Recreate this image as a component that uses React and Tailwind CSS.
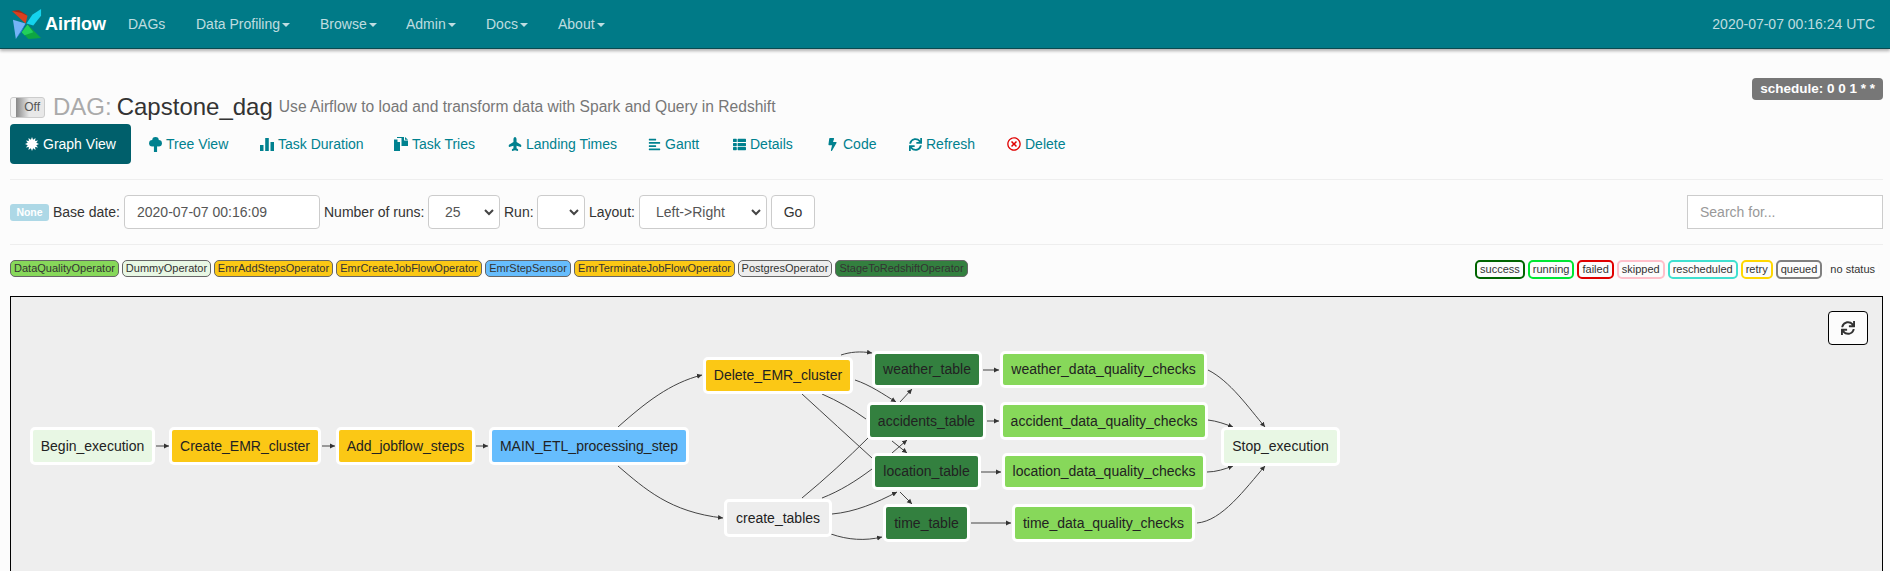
import { FaPlane, FaAlignLeft, FaThList, FaBolt, FaSync, FaRegTimesCircle } from "react-icons/fa";

const navItems = [
  { label: "DAGs", caret: false, w: "w-[68px]" },
  { label: "Data Profiling", caret: true, w: "w-[124px]" },
  { label: "Browse", caret: true, w: "w-[86px]" },
  { label: "Admin", caret: true, w: "w-[80px]" },
  { label: "Docs", caret: true, w: "w-[72px]" },
  { label: "About", caret: true, w: "w-[76px]" },
];

const operators = [
  { label: "DataQualityOperator", bg: "bg-[#87d85a]", w: "w-[109px]" },
  { label: "DummyOperator", bg: "bg-[#e8f7e4]", w: "w-[89px]" },
  { label: "EmrAddStepsOperator", bg: "bg-[#fbc815]", w: "w-[119px]" },
  { label: "EmrCreateJobFlowOperator", bg: "bg-[#fbc815]", w: "w-[146px]" },
  { label: "EmrStepSensor", bg: "bg-[#66bdfd]", w: "w-[86px]" },
  { label: "EmrTerminateJobFlowOperator", bg: "bg-[#fbc815]", w: "w-[161px]" },
  { label: "PostgresOperator", bg: "bg-[#ededed]", w: "w-[94px]" },
  { label: "StageToRedshiftOperator", bg: "bg-[#33803f]", w: "w-[133px]" },
];

const statuses = [
  { label: "success", border: "border-[#006400]" },
  { label: "running", border: "border-[#00e632]" },
  { label: "failed", border: "border-[#e00000]" },
  { label: "skipped", border: "border-[#ffc0cb]" },
  { label: "rescheduled", border: "border-[#40e0d0]" },
  { label: "retry", border: "border-[#ffd700]" },
  { label: "queued", border: "border-[#808080]" },
  { label: "no status", border: "border-[#fafafa]" },
];

const nodes = [
  { label: "Begin_execution", x: 30, y: 426, w: 125, h: 38, bg: "bg-[#e8f7e4]" },
  { label: "Create_EMR_cluster", x: 169, y: 426, w: 152, h: 38, bg: "bg-[#fbc815]" },
  { label: "Add_jobflow_steps", x: 336, y: 426, w: 139, h: 38, bg: "bg-[#fbc815]" },
  { label: "MAIN_ETL_processing_step", x: 489, y: 426, w: 200, h: 38, bg: "bg-[#66bdfd]" },
  { label: "Delete_EMR_cluster", x: 703, y: 356, w: 150, h: 37, bg: "bg-[#fbc815]" },
  { label: "create_tables", x: 724, y: 498, w: 108, h: 38, bg: "bg-[#ededed]" },
  { label: "weather_table", x: 872, y: 350, w: 110, h: 37, bg: "bg-[#33803f]" },
  { label: "accidents_table", x: 867, y: 401, w: 119, h: 38, bg: "bg-[#33803f]" },
  { label: "location_table", x: 872, y: 452, w: 109, h: 37, bg: "bg-[#33803f]" },
  { label: "time_table", x: 883, y: 503, w: 87, h: 38, bg: "bg-[#33803f]" },
  { label: "weather_data_quality_checks", x: 1000, y: 350, w: 207, h: 37, bg: "bg-[#87d85a]" },
  { label: "accident_data_quality_checks", x: 1000, y: 401, w: 208, h: 38, bg: "bg-[#87d85a]" },
  { label: "location_data_quality_checks", x: 1002, y: 452, w: 204, h: 37, bg: "bg-[#87d85a]" },
  { label: "time_data_quality_checks", x: 1012, y: 503, w: 183, h: 38, bg: "bg-[#87d85a]" },
  { label: "Stop_execution", x: 1221, y: 426, w: 119, h: 39, bg: "bg-[#e8f7e4]" },
];

// page coordinates, the canvas starts at 11,296
const edges = [
  ["M156,445 L169,445", true],
  ["M322,445 L335,445", true],
  ["M476,445 L488,445", true],
  ["M618,426 C645,402 670,382 702,374", true],
  ["M618,465 C645,488 670,511 723,517", true],
  ["M841,354 C850,351 860,350 872,352", true],
  ["M855,379 C870,384 883,393 896,401", true],
  ["M822,393 C838,400 852,408 866,418", false],
  ["M892,440 L907,452", true],
  ["M802,393 C825,414 850,437 872,457", false],
  ["M900,491 L912,503", true],
  ["M802,497 C825,478 848,457 868,437", false],
  ["M900,401 L912,388", true],
  ["M822,497 C840,490 856,480 872,468", false],
  ["M892,452 L907,439", true],
  ["M832,513 C855,511 876,502 897,491", true],
  ["M831,533 C848,539 865,540 882,536", true],
  ["M983,369 L999,369", true],
  ["M987,420 L999,420", true],
  ["M981,471 L1001,471", true],
  ["M971,522 L1011,522", true],
  ["M1208,369 C1230,380 1248,406 1265,426", true],
  ["M1208,419 C1217,420 1225,423 1233,426", true],
  ["M1207,471 C1216,471 1225,468 1233,465", true],
  ["M1197,522 C1222,520 1245,488 1265,465", true],
];

// spiky sun for the graph view tab
const burst = Array.from({ length: 24 }, (_, i) => {
  const r = i % 2 ? 4.4 : 7;
  const a = (i / 24) * Math.PI * 2;
  return `${(7 + r * Math.cos(a)).toFixed(2)},${(7 + r * Math.sin(a)).toFixed(2)}`;
}).join(" ");

const Logo = () => (
  <svg viewBox="0 0 32 32" className="h-[31px] w-[31px] shrink-0">
    <path d="M1 2 L8 1 L16 6 L15 14 Z" fill="#9c2a16" />
    <path d="M1 2 L15 15 L17 7 L11 4 Z" fill="#d8401f" />
    <path d="M31 0 L22 6 L16 15 L23 17 L31 7 Z" fill="#14d3ee" />
    <path d="M5 31 L2 11 L15 15 L11 22 Z" fill="#74b3f7" />
    <path d="M5 31 L15 15 L11 23 Z" fill="#2f7de8" />
    <path d="M31 30 L17 16 L11 24 L18 31 Z" fill="#0ea641" />
    <path d="M17 16 L23 24 L14 27 L11 24 Z" fill="#22cf5c" />
  </svg>
);

const BurstIcon = () => (
  <svg viewBox="0 0 14 14" fill="currentColor" className="h-[14px] w-[14px]">
    <polygon points={burst} />
  </svg>
);

const TreeIcon = () => (
  <svg viewBox="0 0 14 16" fill="currentColor" className="h-[15px] w-[13px]">
    <circle cx="7" cy="3.6" r="3.6" />
    <circle cx="3.6" cy="6.6" r="3.5" />
    <circle cx="10.4" cy="6.6" r="3.5" />
    <path d="M4.5 6h5v4h-5zM5.3 9h3.4v7H5.3z" />
  </svg>
);

const StatsIcon = () => (
  <svg viewBox="0 0 14 14" fill="currentColor" className="h-[14px] w-[14px]">
    <path d="M0 8h3.5v6H0zM5.2 1h3.6v13H5.2zM10.5 5H14v9h-3.5z" />
  </svg>
);

const DuplicateIcon = () => (
  <svg viewBox="0 0 14 14" fill="currentColor" className="h-[14px] w-[14px]">
    <path d="M0 2.5h3.5V5H6v9H0z" />
    <path d="M3 0h5v1H3z" />
    <path d="M7.5 0H10v3.5h4V9H7.5zM11 0l3 2.7h-3z" />
  </svg>
);

const Tab = ({ icon, label, w, active, red }) => (
  <a
    className={`flex h-[40px] items-center rounded-[4px] pl-[15px] text-[14px] ${w} ${
      active ? "bg-[#005f6b] text-white" : "text-[#00818f]"
    }`}
  >
    <span className={`mr-[4px] flex w-[14px] shrink-0 justify-center ${red ? "text-[#e00000]" : ""}`}>{icon}</span>
    {label}
  </a>
);

const Select = ({ children, w }) => (
  <div className={`flex h-[34px] shrink-0 items-center justify-between rounded-[4px] border border-[#ccc] bg-white pl-[16px] pr-[4px] text-[14px] text-[#555] ${w}`}>
    <span>{children}</span>
    <svg viewBox="0 0 12 12" className="h-[12px] w-[12px]" fill="none" stroke="#444" strokeWidth="2">
      <path d="M2 4l4 4 4-4" />
    </svg>
  </div>
);

export default function App() {
  return (
    <div className="h-[571px] overflow-hidden bg-[#fcfcfc] font-['Liberation_Sans',Arial,sans-serif] text-[14px] text-[#333]">
      {/* Navbar */}
      <nav className="flex h-[49px] items-center justify-between border-b border-[#0b4a50] bg-[#007a87] shadow-[0_2px_3px_rgba(0,0,0,0.3)]">
        <div className="flex items-center">
          <div className="ml-[11px] flex items-center">
            <Logo />
            <span className="ml-[3px] w-[83px] text-[18px] font-bold text-white">Airflow</span>
          </div>
          {navItems.map((item) => (
            <a key={item.label} className={`flex items-center text-[14px] text-white/75 ${item.w}`}>
              {item.label}
              {item.caret && <span className="ml-[2px] mt-[2px] h-0 w-0 border-x-[4px] border-t-[4px] border-x-transparent border-t-white/75" />}
            </a>
          ))}
        </div>
        <span className="mr-[15px] text-[14px] text-white/75">2020-07-07 00:16:24 UTC</span>
      </nav>

      <div className="ml-[10px] mr-[7px]">
        {/* Title */}
        <div className="flex h-[75px] items-start justify-between pt-[29px]">
          <div className="flex items-center pt-[11px]">
            <div className="flex h-[21px] w-[35px] items-center justify-end rounded-[3px] border border-[#ccc] bg-[linear-gradient(to_right,#f5f5f5_0,#f5f5f5_14%,#8a8a8a_16%,#e8e8e8_55%)] pr-[4px] text-[12px] text-[#555]">
              Off
            </div>
            <span className="ml-[8px] text-[24px] text-[#aaa]">DAG:</span>
            <span className="ml-[5px] text-[24px] text-[#333]">Capstone_dag</span>
            <span className="ml-[6px] text-[15.6px] text-[#777]">Use Airflow to load and transform data with Spark and Query in Redshift</span>
          </div>
          <span className="rounded-[4px] bg-[#777] px-[8px] py-[3px] text-[13.5px] font-bold leading-[16px] text-white">schedule: 0 0 1 * *</span>
        </div>

        {/* Tabs */}
        <div className="flex">
          <Tab active icon={<BurstIcon />} label="Graph View" w="w-[121px] mr-[2px]" />
          <Tab icon={<TreeIcon />} label="Tree View" w="w-[112px]" />
          <Tab icon={<StatsIcon />} label="Task Duration" w="w-[134px]" />
          <Tab icon={<DuplicateIcon />} label="Task Tries" w="w-[114px]" />
          <Tab icon={<FaPlane size={14} className="-rotate-90" />} label="Landing Times" w="w-[139px]" />
          <Tab icon={<FaAlignLeft size={13} />} label="Gantt" w="w-[85px]" />
          <Tab icon={<FaThList size={13} />} label="Details" w="w-[93px]" />
          <Tab icon={<FaBolt size={13} />} label="Code" w="w-[83px]" />
          <Tab icon={<FaSync size={13} />} label="Refresh" w="w-[99px]" />
          <Tab red icon={<FaRegTimesCircle size={14} />} label="Delete" w="w-[90px]" />
        </div>

        <hr className="mt-[15px] border-[#eee]" />

        {/* Form */}
        <div className="flex items-center justify-between whitespace-nowrap py-[15px]">
          <div className="flex items-center">
            <span className="mr-[4px] w-[39px] rounded-[3px] bg-[#add8e6] py-[3px] text-center text-[10.5px] font-bold leading-[11px] text-white">None</span>
            <span className="w-[71px]">Base date:</span>
            <div className="flex h-[34px] w-[196px] shrink-0 items-center rounded-[4px] border border-[#ccc] bg-white pl-[12px] text-[14px] text-[#555]">2020-07-07 00:16:09</div>
            <span className="ml-[4px] w-[104px]">Number of runs:</span>
            <Select w="w-[72px]">25</Select>
            <span className="ml-[4px] w-[33px]">Run:</span>
            <Select w="w-[48px]"></Select>
            <span className="ml-[4px] w-[50px]">Layout:</span>
            <Select w="w-[128px]">Left-&gt;Right</Select>
            <button className="ml-[4px] h-[34px] w-[44px] rounded-[4px] border border-[#ccc] bg-white text-[14px] text-[#333]">Go</button>
          </div>
          <div className="flex h-[34px] w-[196px] items-center border border-[#ccc] bg-white pl-[12px] text-[14px] text-[#999]">Search for...</div>
        </div>

        <hr className="border-[#eee]" />

        {/* Legend */}
        <div className="flex h-[51px] items-start justify-between pt-[15px]">
          <div className="flex gap-[3px]">
            {operators.map((op) => (
              <span key={op.label} className={`flex h-[17px] items-center justify-center rounded-[5px] border border-[#666] text-[11px] text-[#333] ${op.bg} ${op.w}`}>
                {op.label}
              </span>
            ))}
          </div>
          <div className="mr-[3px] flex gap-[3px]">
            {statuses.map((s) => (
              <span key={s.label} className={`flex h-[19px] items-center rounded-[5px] border-2 bg-[#fcfcfc] px-[3px] text-[11px] text-[#333] ${s.border}`}>
                {s.label}
              </span>
            ))}
          </div>
        </div>

        {/* Graph */}
        <div className="relative h-[300px] border border-black bg-[#eee]">
          <button className="absolute right-[14px] top-[14px] flex h-[34px] w-[40px] items-center justify-center rounded-[4px] border border-black bg-[#fcfcfc] text-[#333]">
            <FaSync size={14} />
          </button>
          <svg className="absolute left-[-11px] top-[-296px] h-[600px] w-[1400px]" fill="none">
            <defs>
              <marker id="arrow" markerWidth="6" markerHeight="6" refX="5" refY="3" orient="auto" markerUnits="userSpaceOnUse">
                <path d="M0 0.5L5 3L0 5.5z" fill="#333" />
              </marker>
            </defs>
            {edges.map(([d, head]) => (
              <path key={d} d={d} stroke="#444" strokeWidth="1" markerEnd={head ? "url(#arrow)" : undefined} />
            ))}
          </svg>
          {nodes.map((n) => (
            <div
              key={n.label}
              className={`absolute flex items-center justify-center rounded-[5px] border-[3px] border-white text-[14px] text-[#222] ${n.bg}`}
              style={{ left: n.x - 11, top: n.y - 296, width: n.w, height: n.h }}
            >
              {n.label}
            </div>
          ))}
        </div>
      </div>
    </div>
  );
}
